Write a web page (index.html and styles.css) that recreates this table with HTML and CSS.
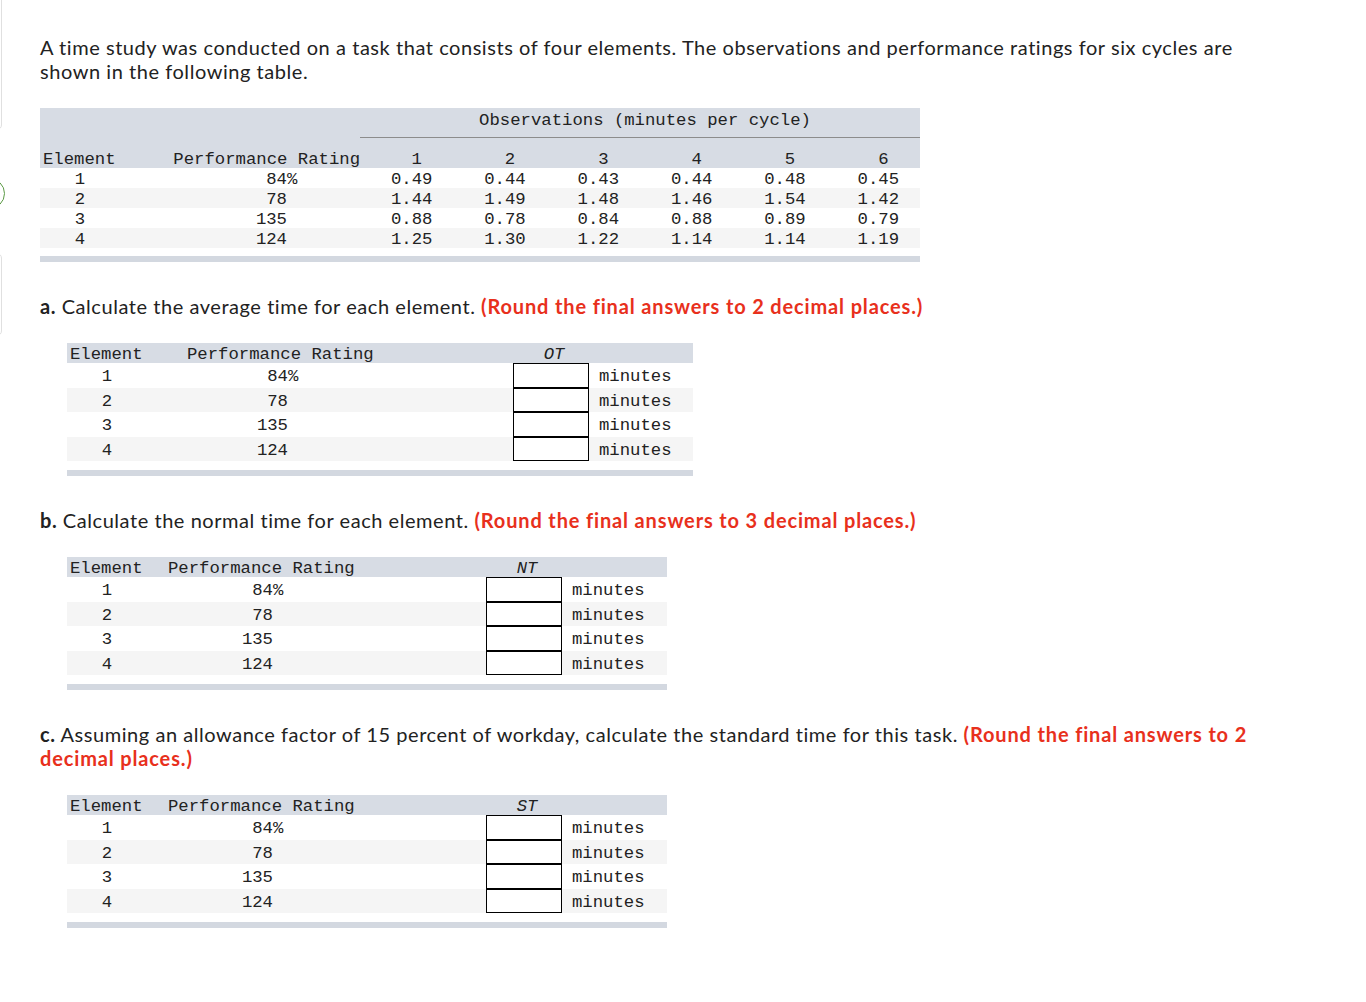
FILE: index.html
```html
<!DOCTYPE html>
<html lang="en">
<head>
<meta charset="utf-8">
<title>Time study</title>
<link rel="stylesheet" href="styles.css">
</head>
<body>
<div class="edge edge-top"></div>
<div class="edge edge-ring"></div>
<div class="edge edge-mid"></div>
<main class="page">
  <p class="text intro">A time study was conducted on a task that consists of four elements. The observations and performance ratings for six cycles are shown in the following table.</p>

  <div class="obs">
    <div class="obs-row obs-head1"><div class="obs-title">Observations (minutes per cycle)</div></div>
    <div class="obs-row obs-head2">
      <div class="c-el-h">Element</div><div class="c-pr-h">Performance Rating</div>
      <div class="c-n-h">1</div><div class="c-n-h">2</div><div class="c-n-h">3</div><div class="c-n-h">4</div><div class="c-n-h">5</div><div class="c-n-h">6</div>
    </div>
    <div class="obs-row">
      <div class="c-el">1</div><div class="c-pr">84<span class="pct">%</span></div>
      <div class="c-n">0.49</div><div class="c-n">0.44</div><div class="c-n">0.43</div><div class="c-n">0.44</div><div class="c-n">0.48</div><div class="c-n">0.45</div>
    </div>
    <div class="obs-row alt">
      <div class="c-el">2</div><div class="c-pr">78</div>
      <div class="c-n">1.44</div><div class="c-n">1.49</div><div class="c-n">1.48</div><div class="c-n">1.46</div><div class="c-n">1.54</div><div class="c-n">1.42</div>
    </div>
    <div class="obs-row">
      <div class="c-el">3</div><div class="c-pr">135</div>
      <div class="c-n">0.88</div><div class="c-n">0.78</div><div class="c-n">0.84</div><div class="c-n">0.88</div><div class="c-n">0.89</div><div class="c-n">0.79</div>
    </div>
    <div class="obs-row alt">
      <div class="c-el">4</div><div class="c-pr">124</div>
      <div class="c-n">1.25</div><div class="c-n">1.30</div><div class="c-n">1.22</div><div class="c-n">1.14</div><div class="c-n">1.14</div><div class="c-n">1.19</div>
    </div>
    <div class="bar"></div>
  </div>

  <p class="text q"><b>a.</b> Calculate the average time for each element. <strong class="hint">(Round the final answers to 2 decimal places.)</strong></p>

  <div class="ans ans-a">
    <div class="ans-row ans-head"><div class="a-el-h">Element</div><div class="a-pr-h">Performance Rating</div><div></div><div class="a-var">OT</div><div></div></div>
    <div class="ans-row"><div class="a-el">1</div><div class="a-pr">84<span class="pct">%</span></div><div></div><div class="box"></div><div class="unit">minutes</div></div>
    <div class="ans-row alt"><div class="a-el">2</div><div class="a-pr">78</div><div></div><div class="box"></div><div class="unit">minutes</div></div>
    <div class="ans-row"><div class="a-el">3</div><div class="a-pr">135</div><div></div><div class="box"></div><div class="unit">minutes</div></div>
    <div class="ans-row alt"><div class="a-el">4</div><div class="a-pr">124</div><div></div><div class="box"></div><div class="unit">minutes</div></div>
    <div class="bar"></div>
  </div>

  <p class="text q"><b>b.</b> Calculate the normal time for each element. <strong class="hint">(Round the final answers to 3 decimal places.)</strong></p>

  <div class="ans ans-b">
    <div class="ans-row ans-head"><div class="a-el-h">Element</div><div class="a-pr-h">Performance Rating</div><div></div><div class="a-var">NT</div><div></div></div>
    <div class="ans-row"><div class="a-el">1</div><div class="a-pr">84<span class="pct">%</span></div><div></div><div class="box"></div><div class="unit">minutes</div></div>
    <div class="ans-row alt"><div class="a-el">2</div><div class="a-pr">78</div><div></div><div class="box"></div><div class="unit">minutes</div></div>
    <div class="ans-row"><div class="a-el">3</div><div class="a-pr">135</div><div></div><div class="box"></div><div class="unit">minutes</div></div>
    <div class="ans-row alt"><div class="a-el">4</div><div class="a-pr">124</div><div></div><div class="box"></div><div class="unit">minutes</div></div>
    <div class="bar"></div>
  </div>

  <p class="text q"><b>c.</b> Assuming an allowance factor of 15 percent of workday, calculate the standard time for this task. <strong class="hint">(Round the final answers to 2 decimal places.)</strong></p>

  <div class="ans ans-b">
    <div class="ans-row ans-head"><div class="a-el-h">Element</div><div class="a-pr-h">Performance Rating</div><div></div><div class="a-var">ST</div><div></div></div>
    <div class="ans-row"><div class="a-el">1</div><div class="a-pr">84<span class="pct">%</span></div><div></div><div class="box"></div><div class="unit">minutes</div></div>
    <div class="ans-row alt"><div class="a-el">2</div><div class="a-pr">78</div><div></div><div class="box"></div><div class="unit">minutes</div></div>
    <div class="ans-row"><div class="a-el">3</div><div class="a-pr">135</div><div></div><div class="box"></div><div class="unit">minutes</div></div>
    <div class="ans-row alt"><div class="a-el">4</div><div class="a-pr">124</div><div></div><div class="box"></div><div class="unit">minutes</div></div>
    <div class="bar"></div>
  </div>
</main>
</body>
</html>
```

FILE: styles.css
```css
html, body {
  margin: 0;
  padding: 0;
  background: #ffffff;
}

body {
  position: relative;
  min-height: 1002px;
  overflow: hidden;
  font-family: Lato, "Open Sans", "Liberation Sans", sans-serif;
  color: #222222;
}

.page {
  padding: 35px 0 40px 40px;
  width: 1220px;
}

.text {
  margin: 0;
  font-size: 20px;
  line-height: 24px;
  letter-spacing: 0.55px;
}

.text b {
  font-weight: 700;
}

.q {
  margin-top: 32px;
}

.hint {
  color: #e8301c;
  font-weight: 700;
  letter-spacing: 0.85px;
}

/* observation table */
.obs {
  margin-top: 25px;
  width: 880px;
  font-family: "Liberation Mono", "DejaVu Sans Mono", monospace;
  font-size: 17.3px;
  color: #222222;
}

.obs-row {
  display: grid;
  grid-template-columns: 80px 240px repeat(6, 1fr);
  box-sizing: border-box;
  height: 20px;
  padding-top: 4px;
  line-height: 16px;
}

.obs-head1 {
  height: 30px;
  padding-top: 0;
  background: #d7dce4;
}

.obs-title {
  grid-column: 3 / 9;
  box-sizing: border-box;
  height: 30px;
  padding-top: 4px;
  border-bottom: 1px solid #8c8c8c;
  text-align: center;
  padding-left: 10px;
  line-height: 18px;
}

.obs-head2 {
  height: 30px;
  padding-top: 14px;
  background: #d7dce4;
}

.c-el-h {
  padding-left: 3px;
  white-space: nowrap;
}

.c-pr-h {
  text-align: right;
  white-space: nowrap;
}

.c-n-h {
  text-align: center;
  padding-left: 20px;
}

.c-el {
  text-align: center;
}

.c-pr {
  text-align: right;
  padding-right: 73px;
}

.c-n {
  text-align: center;
  padding-left: 10px;
}

.pct {
  margin-right: -1ch;
}

.alt {
  background: #f5f5f5;
}

.bar {
  height: 6px;
  margin-top: 8px;
  background: #d3d8e0;
}

/* answer tables */
.ans {
  margin-top: 25px;
  margin-left: 27px;
  font-family: "Liberation Mono", "DejaVu Sans Mono", monospace;
  font-size: 17.3px;
  color: #222222;
}

.ans-a {
  width: 626px;
}

.ans-b {
  width: 600px;
}

.ans-row {
  display: grid;
  height: 24.5px;
  line-height: 20.5px;
}

.ans-a .ans-row {
  grid-template-columns: 80px 226px 140px 76px 1fr;
}

.ans-b .ans-row {
  grid-template-columns: 80px 208px 131px 76px 1fr;
}

.ans-head {
  height: 20px;
  line-height: 16px;
  background: #d7dce4;
}

.a-el-h,
.a-pr-h,
.a-var,
.a-el,
.a-pr,
.unit {
  padding-top: 4px;
}

.a-el-h {
  padding-left: 3px;
  white-space: nowrap;
}

.ans-a .a-pr-h {
  padding-left: 40px;
  white-space: nowrap;
}

.ans-b .a-pr-h {
  padding-left: 21px;
  white-space: nowrap;
}

.a-var {
  font-style: italic;
  text-align: center;
  padding-left: 6px;
}

.a-el {
  text-align: center;
}

.a-pr {
  text-align: right;
}

.ans-a .a-pr {
  padding-right: 85px;
}

.ans-b .a-pr {
  padding-right: 82px;
}

.box {
  box-sizing: border-box;
  border: 1px solid #000000;
  background: #ffffff;
}

.unit {
  padding-left: 10px;
}

.ans .bar {
  margin-top: 9px;
}

/* partially visible sidebar pieces at the left edge */
.edge {
  position: absolute;
  box-sizing: border-box;
}

.edge-top {
  left: -20px;
  top: -10px;
  width: 22px;
  height: 140px;
  border: 1px solid #e0e0e0;
  border-radius: 5px;
}

.edge-ring {
  left: -26px;
  top: 178px;
  width: 31px;
  height: 31px;
  border: 1.5px solid #5b9a45;
  border-radius: 50%;
}

.edge-mid {
  left: -20px;
  top: 253px;
  width: 22px;
  height: 83px;
  border: 1px solid #e0e0e0;
  border-radius: 5px;
}
```
